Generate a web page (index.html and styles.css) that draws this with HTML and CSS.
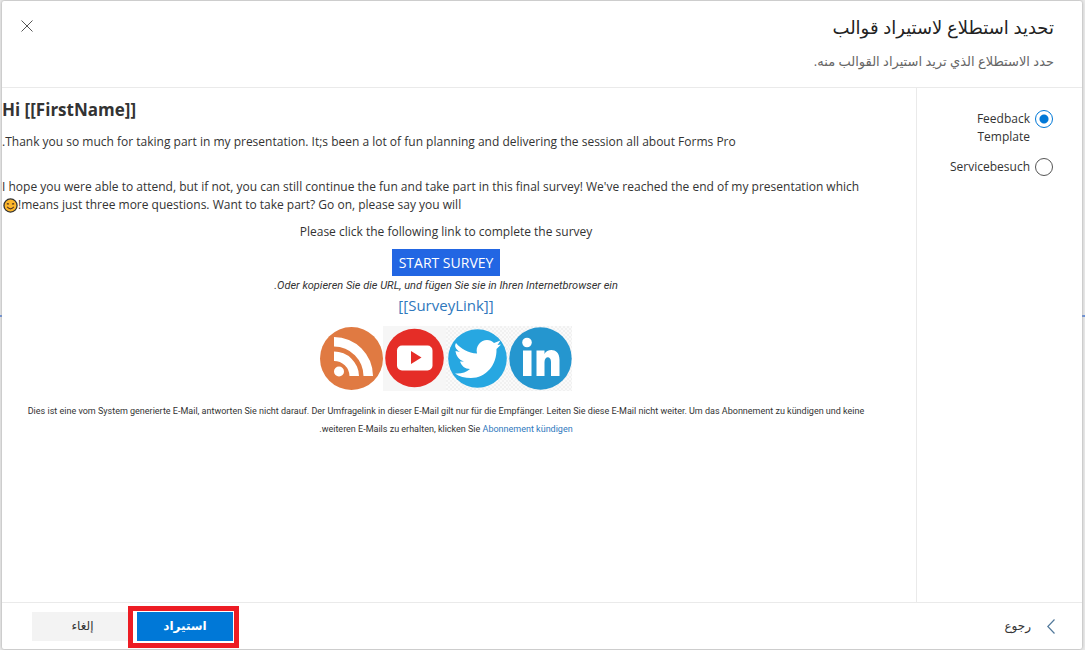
FILE: index.html
```html
<!DOCTYPE html>
<html lang="ar" dir="rtl">
<head>
<meta charset="utf-8">
<title>تحديد استطلاع لاستيراد قوالب</title>
<link rel="stylesheet" href="styles.css">
</head>
<body>
<div class="backdrop" aria-hidden="true"><i class="stub stub-left"></i><i class="stub stub-right"></i></div>
<main class="dialog" role="dialog" aria-labelledby="title">
  <header class="head">
    <div>
      <h1 id="title" class="title">تحديد استطلاع لاستيراد قوالب</h1>
      <p class="subtitle">حدد الاستطلاع الذي تريد استيراد القوالب منه.</p>
    </div>
    <button class="close" type="button" aria-label="إغلاق"><svg width="12" height="12" viewBox="0 0 12 12"><path d="M.5.5l11 11M11.5.5l-11 11" fill="none" stroke="#555" stroke-width="1"/></svg></button>
  </header>
  <div class="body">
    <div class="surveys" role="radiogroup" aria-labelledby="title">
      <label class="choice"><input class="radio" type="radio" name="survey" checked><span>Feedback Template</span></label>
      <label class="choice"><input class="radio" type="radio" name="survey"><span>Servicebesuch</span></label>
    </div>
    <article class="preview">
      <h2 class="greeting"><bdi>Hi [[FirstName]]</bdi></h2>
      <p class="para">Thank you so much for taking part in my presentation. It;s been a lot of fun planning and delivering the session all about Forms Pro.</p>
      <p class="para">I hope you were able to attend, but if not, you can still continue the fun and take part in this final survey! We've reached the end of my presentation which<br>means just three more questions. Want to take part? Go on, please say you will!<svg class="smile" width="15" height="15" viewBox="0 0 16 16"><circle cx="8" cy="8" r="7" fill="#fdb72b" stroke="#333" stroke-width="1.4"/><path d="M4.2 6.8q1-1.6 2 0M9.8 6.8q1-1.6 2 0M4.4 9.5q3.6 4.2 7.2 0" fill="none" stroke="#5b371c" stroke-width="1.1"/></svg></p>
      <div class="invite">
        <p class="prompt">Please click the following link to complete the survey</p>
        <a class="start" href="#survey">START SURVEY</a>
        <p class="hint">Oder kopieren Sie die URL, und fügen Sie sie in Ihren Internetbrowser ein.</p>
        <a class="survey-link" href="#link" dir="ltr">[[SurveyLink]]</a>
      </div>
      <div class="social" dir="ltr">
        <a class="tile" href="#rss" aria-label="RSS"><svg viewBox="0 0 63 65"><circle cx="31.5" cy="32.5" r="31.5" fill="#e07a42"/><g fill="#fff"><circle cx="19" cy="45.500" r="5"/><path d="M14 25.500A25 25 0 0 1 39 50H29.500A15.500 15.500 0 0 0 14 35zM14 11A39 39 0 0 1 53 50H43.500A29.500 29.500 0 0 0 14 20.500z"/></g></svg></a>
        <a class="tile plain" href="#youtube" aria-label="YouTube"><svg viewBox="0 0 63 65"><circle cx="31.500" cy="32" r="29.300" fill="#e52d27"/><rect x="14" y="19.500" width="35.500" height="25" rx="5" fill="#fff"/><path d="M28 25l10.500 6.500L28 38z" fill="#e52d27"/></svg></a>
        <a class="tile checked" href="#twitter" aria-label="Twitter"><svg viewBox="0 0 63 65"><circle cx="31.500" cy="32.500" r="29.300" fill="#27a7e1"/><path d="M10 17C15 23 22 27 31 27.500C29 20 35 14 41 14C44 14 46 15 48 17L54.500 14.500L51.500 19L55 18.500L50.500 23C51 39 40 52 25 52C19 52 13 50.500 9 47.500C15 48 20 46.500 24 43C19 43 15.500 40 14 35.500L18 35.500C13 34 10 30 9.500 25L14 26C9.500 23 8 20 10 17z" fill="#fff"/></svg></a>
        <a class="tile checked" href="#linkedin" aria-label="LinkedIn"><svg viewBox="0 0 63 65"><circle cx="31.500" cy="32.500" r="31.200" fill="#2596cf"/><g fill="#fff"><circle cx="18" cy="16.500" r="4.800"/><path d="M14 24.500h8.500V50H14zM27.500 24.500h8V28C38 22.500 50.500 21.500 50.500 34V50H42V36c0-6.500-6.500-6-6.500 0v14h-8z"/></g></svg></a>
      </div>
      <p class="legal">Dies ist eine vom System generierte E-Mail, antworten Sie nicht darauf. Der Umfragelink in dieser E-Mail gilt nur für die Empfänger. Leiten Sie diese E-Mail nicht weiter. Um das Abonnement zu kündigen und keine<br>weiteren E-Mails zu erhalten, klicken Sie <a href="#unsubscribe">Abonnement kündigen</a>.</p>
    </article>
  </div>
  <footer class="foot">
    <button class="back" type="button"><svg width="8" height="15" viewBox="0 0 8 15"><path d="M7.500.5L.8 7.500l6.700 7" fill="none" stroke="#52799b" stroke-width="1.200"/></svg><span>رجوع</span></button>
    <div class="actions">
      <div class="marked"><button class="button primary" type="button">استيراد</button></div>
      <button class="button" type="button">إلغاء</button>
    </div>
  </footer>
</main>
</body>
</html>
```
FILE: styles.css
```css
* { box-sizing: border-box; }
body {
  margin: 0;
  min-height: 100vh;
  display: flex;
  padding: 1px 3px 1px 2px;
  background: #e9e9e9;
  color: #333;
  font: 12px/18px "Open Sans", "DejaVu Sans", sans-serif;
}
h1, h2, p { margin: 0; }
button { font: inherit; color: inherit; border: 0; padding: 0; background: none; }
a { color: #2f78bd; text-decoration: none; }
svg { display: block; }
.backdrop { position: absolute; inset: 0; }
.stub { position: absolute; top: 315px; width: 4px; height: 2px; background: #6c93dc; }
.stub-left { left: 0; }
.stub-right { right: 0; }
.dialog {
  position: relative;
  flex: 1;
  display: flex;
  flex-direction: column;
  background: #fff;
  border-radius: 2px;
  box-shadow: 0 0 3px #999;
}
.head {
  display: flex;
  justify-content: space-between;
  align-items: flex-start;
  height: 87px;
  padding: 12px 28px 0 19px;
  border-bottom: 1px solid #eaeaea;
}
.title { font-size: 18px; line-height: 28px; font-weight: 400; color: #222; }
.subtitle { margin-top: 10px; font-size: 13px; line-height: 20px; color: #666; }
.close { padding: 7px 0; }
.body { flex: 1; display: flex; }
.surveys {
  width: 166px;
  padding: 22px 29px;
  border-left: 1px solid #eaeaea;
  display: flex;
  flex-direction: column;
  gap: 12px;
}
.choice { display: flex; gap: 5px; }
.radio {
  appearance: none;
  flex: none;
  width: 18px;
  height: 18px;
  margin: 0;
  border: 1px solid #555;
  border-radius: 50%;
}
.radio:checked {
  border-color: #0078d7;
  background: radial-gradient(circle, #0078d7 4px, #fff 5px);
}
.preview { flex: 1; min-width: 0; padding-top: 10px; padding-right: 26px; overflow: hidden; }
.greeting { font-size: 17px; line-height: 24px; text-align: left; }
.para { text-align: left; margin-top: 11px; white-space: nowrap; }
.para + .para { margin-top: 27px; }
.smile { display: inline-block; vertical-align: -4px; margin-left: 1px; }
.invite { display: flex; flex-direction: column; align-items: center; margin-top: 9px; }
.start {
  margin-top: 8px;
  padding: 4px 7px;
  background: #2266e3;
  color: #fff;
  font-size: 14px;
  line-height: 19px;
}
.hint { font-family: Roboto, sans-serif; font-size: 11px; font-style: italic; line-height: 20px; }
.survey-link { font-size: 15px; line-height: 18px; }
.social { display: flex; justify-content: center; margin-top: 12px; }
.tile { width: 63px; height: 65px; }
.plain { background: #f6f6f6; }
.checked { background: repeating-conic-gradient(#f1f1f1 0 25%, #fafafa 0 50%) 0 0 / 4px 4px; }
.legal { margin-top: 11px; font-family: Roboto, sans-serif; font-size: 9px; text-align: center; white-space: nowrap; }
.foot {
  display: flex;
  justify-content: space-between;
  align-items: center;
  height: 47px;
  padding: 0 27px 0 30px;
  border-top: 1px solid #eaeaea;
}
.back { display: flex; align-items: center; gap: 16px; }
.actions { display: flex; gap: 4px; }
.button { width: 101px; height: 29px; background: #f3f3f3; }
.primary { width: 96px; background: #0078d7; color: #fff; font-weight: 700; }
.marked { position: relative; display: flex; }
.marked::after {
  content: "";
  position: absolute;
  inset: -6px -6px -7px -9px;
  border: 5px solid #ed1c24;
  pointer-events: none;
}
```
